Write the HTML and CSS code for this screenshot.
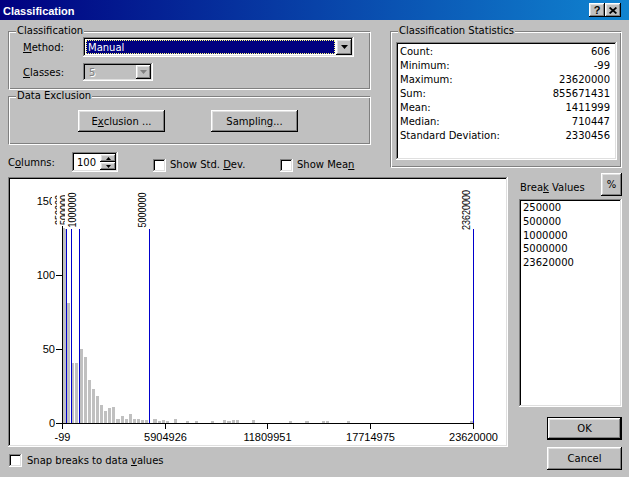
FILE: index.html
```html
<!DOCTYPE html>
<html lang="en">
<head>
<meta charset="utf-8">
<title>Classification</title>
<link rel="stylesheet" href="styles.css">
</head>
<body>
<div class="titlebar">
  <span class="title">Classification</span>
  <div class="tbtns">
    <span class="tbtn help">?</span>
    <span class="tbtn close"><svg width="8" height="7" viewBox="0 0 8 7"><path d="M0.6 0.5L7.4 6.5M7.4 0.5L0.6 6.5" stroke="#000" stroke-width="1.7" fill="none"/></svg></span>
  </div>
</div>

<div class="top">
  <div class="leftcol">
    <div class="group g-class">
      <span class="glabel">Classification</span>
      <div class="frow method">
        <span class="lbl"><u>M</u>ethod:</span>
        <div class="combo">
          <span class="sel">Manual</span>
          <span class="ddbtn"><svg width="7" height="4" viewBox="0 0 7 4"><polygon points="0,0 7,0 3.5,4" fill="#000"/></svg></span>
        </div>
      </div>
      <div class="frow classes">
        <span class="lbl"><u>C</u>lasses:</span>
        <div class="combo dis">
          <span class="disval">5</span>
          <span class="ddbtn small"><svg width="7" height="4" viewBox="0 0 7 4"><polygon points="0,0 7,0 3.5,4" fill="#808080"/></svg></span>
        </div>
      </div>
    </div>

    <div class="group g-excl">
      <span class="glabel">Data Exclusion</span>
      <span class="btn wide">E<u>x</u>clusion ...</span>
      <span class="btn wide">Samplin<u>g</u> ...</span>
    </div>

    <div class="colrow">
      <span class="lbl">C<u>o</u>lumns:</span>
      <div class="spin">
        <span class="val">100</span>
        <span class="arrows">
          <span class="sbtn"><svg width="5" height="3" viewBox="0 0 5 3"><polygon points="2.5,0 5,3 0,3" fill="#000"/></svg></span>
          <span class="sbtn"><svg width="5" height="3" viewBox="0 0 5 3"><polygon points="0,0 5,0 2.5,3" fill="#000"/></svg></span>
        </span>
      </div>
      <span class="chk chk1"><span class="box"></span><span>Show Std. <u>D</u>ev.</span></span>
      <span class="chk"><span class="box"></span><span>Show Mea<u>n</u></span></span>
    </div>
  </div>

  <div class="group g-stats">
    <span class="glabel">Classification Statistics</span>
    <div class="statlist">
      <div class="srow"><span>Count:</span><span>606</span></div>
      <div class="srow"><span>Minimum:</span><span>-99</span></div>
      <div class="srow"><span>Maximum:</span><span>23620000</span></div>
      <div class="srow"><span>Sum:</span><span>855671431</span></div>
      <div class="srow"><span>Mean:</span><span>1411999</span></div>
      <div class="srow"><span>Median:</span><span>710447</span></div>
      <div class="srow"><span>Standard Deviation:</span><span>2330456</span></div>
    </div>
  </div>
</div>

<div class="bottom">
  <div class="chartcol">
    <div class="chart">
      <svg class="plot" width="496" height="266" viewBox="0 0 496 266" shape-rendering="crispEdges">
        <g class="bars" fill="#c0c0c0">
          <rect x="53" y="49" width="3.1" height="195"/>
          <rect x="57.11" y="124" width="3.1" height="120"/>
          <rect x="61.22" y="184" width="3.1" height="60"/>
          <rect x="65.33" y="184" width="3.1" height="60"/>
          <rect x="69.44" y="170" width="3.1" height="74"/>
          <rect x="73.55" y="178" width="3.1" height="66"/>
          <rect x="77.66" y="201" width="3.1" height="43"/>
          <rect x="81.77" y="210" width="3.1" height="34"/>
          <rect x="85.88" y="217" width="3.1" height="27"/>
          <rect x="89.99" y="226" width="3.1" height="18"/>
          <rect x="94.1" y="232" width="3.1" height="12"/>
          <rect x="98.21" y="229" width="3.1" height="15"/>
          <rect x="102.32" y="228" width="3.1" height="16"/>
          <rect x="106.43" y="240" width="3.1" height="4"/>
          <rect x="110.54" y="237" width="3.1" height="7"/>
          <rect x="114.65" y="240" width="3.1" height="4"/>
          <rect x="118.76" y="235" width="3.1" height="9"/>
          <rect x="122.87" y="240" width="3.1" height="4"/>
          <rect x="126.98" y="240" width="3.1" height="4"/>
          <rect x="131.09" y="241" width="3.1" height="3"/>
          <rect x="135.2" y="241" width="3.1" height="3"/>
          <rect x="143.42" y="240" width="3.1" height="4"/>
          <rect x="147.53" y="242" width="3.1" height="2"/>
          <rect x="151.64" y="241" width="3.1" height="3"/>
          <rect x="155.75" y="242" width="3.1" height="2"/>
          <rect x="163.97" y="240" width="3.1" height="4"/>
          <rect x="176.3" y="242" width="3.1" height="2"/>
          <rect x="184.52" y="242" width="3.1" height="2"/>
          <rect x="200.96" y="242" width="3.1" height="2"/>
          <rect x="213.29" y="241" width="3.1" height="3"/>
          <rect x="217.4" y="242" width="3.1" height="2"/>
          <rect x="221.51" y="241" width="3.1" height="3"/>
          <rect x="225.62" y="241" width="3.1" height="3"/>
          <rect x="242.06" y="241" width="3.1" height="3"/>
          <rect x="279.05" y="242" width="3.1" height="2"/>
          <rect x="295.49" y="242" width="3.1" height="2"/>
          <rect x="311.93" y="242" width="3.1" height="2"/>
          <rect x="316.04" y="242" width="3.1" height="2"/>
          <rect x="336.59" y="242" width="3.1" height="2"/>
          <rect x="459.89" y="242" width="3.1" height="2"/>
        </g>
        <g class="breaks" stroke="#0000cc" stroke-width="1">
          <line x1="56.5" y1="50" x2="56.5" y2="244"/>
          <line x1="61.5" y1="50" x2="61.5" y2="244"/>
          <line x1="69.5" y1="50" x2="69.5" y2="244"/>
          <line x1="139.5" y1="50" x2="139.5" y2="244"/>
          <line x1="463.5" y1="50" x2="463.5" y2="244"/>
        </g>
        <g class="axes" stroke="#000" stroke-width="1">
          <line x1="52.5" y1="46" x2="52.5" y2="245"/>
          <line x1="52" y1="244.5" x2="464" y2="244.5"/>
          <line x1="46" y1="244.5" x2="52" y2="244.5"/>
          <line x1="46" y1="170.5" x2="52" y2="170.5"/>
          <line x1="46" y1="96.5" x2="52" y2="96.5"/>
          <line x1="46" y1="22.5" x2="52" y2="22.5"/>
          <line x1="52.5" y1="244" x2="52.5" y2="250"/>
          <line x1="155.5" y1="244" x2="155.5" y2="250"/>
          <line x1="257.5" y1="244" x2="257.5" y2="250"/>
          <line x1="360.5" y1="244" x2="360.5" y2="250"/>
          <line x1="463.5" y1="244" x2="463.5" y2="250"/>
        </g>
        <g class="ylab" text-anchor="end">
          <text x="45" y="248">0</text>
          <text x="45" y="174">50</text>
          <text x="45" y="100">100</text>
          <text x="45" y="26">150</text>
        </g>
        <g class="xlab" text-anchor="middle">
          <text x="52.5" y="262">-99</text>
          <text x="155.5" y="262">5904926</text>
          <text x="257.5" y="262">11809951</text>
          <text x="360.5" y="262">17714975</text>
          <text x="463.5" y="262">23620000</text>
        </g>
        <g class="blab">
          <rect x="42" y="15" width="13" height="32" fill="#fff"/>
          <text transform="translate(53 31) rotate(-90)" text-anchor="middle" textLength="30" lengthAdjust="spacingAndGlyphs">250000</text>
          <rect x="47" y="15" width="13" height="32" fill="#fff"/>
          <text transform="translate(58 31) rotate(-90)" text-anchor="middle" textLength="30" lengthAdjust="spacingAndGlyphs">500000</text>
          <rect x="55" y="13" width="13" height="37" fill="#fff"/>
          <text transform="translate(66 31) rotate(-90)" text-anchor="middle" textLength="35" lengthAdjust="spacingAndGlyphs">1000000</text>
          <rect x="125" y="13" width="13" height="37" fill="#fff"/>
          <text transform="translate(136 31) rotate(-90)" text-anchor="middle" textLength="35" lengthAdjust="spacingAndGlyphs">5000000</text>
          <rect x="449" y="10" width="13" height="42" fill="#fff"/>
          <text transform="translate(460 31) rotate(-90)" text-anchor="middle" textLength="40" lengthAdjust="spacingAndGlyphs">23620000</text>
        </g>
      </svg>
    </div>
    <div class="chk snap"><span class="box"></span><span>Snap breaks to data <u>v</u>alues</span></div>
  </div>

  <div class="sidecol">
    <div class="bvhead">
      <span class="bvlabel">Brea<u>k</u> Values</span>
      <span class="btn pct">%</span>
    </div>
    <div class="bvlist">
      <div>250000</div>
      <div>500000</div>
      <div>1000000</div>
      <div>5000000</div>
      <div>23620000</div>
    </div>
    <span class="btn ok">OK</span>
    <span class="btn cancel">Cancel</span>
  </div>
</div>
</body>
</html>
```

FILE: styles.css
```css
* { box-sizing: border-box; }
html, body { margin: 0; padding: 0; }
body {
  width: 629px;
  height: 477px;
  overflow: hidden;
  background: #c0c0c0;
  color: #000;
  font-family: "DejaVu Sans", sans-serif;
  font-size: 10px;
  line-height: 12px;
}
u { text-decoration: underline; text-underline-offset: 1px; }

/* shared 3D looks */
.btn, .tbtn, .ddbtn, .sbtn {
  background: #c0c0c0;
  box-shadow: inset -1px -1px #000, inset 1px 1px #fff, inset -2px -2px #808080, inset 2px 2px #dfdfdf;
}
.combo, .spin, .box, .statlist, .chart, .bvlist {
  box-shadow: inset -1px -1px #fff, inset 1px 1px #808080, inset -2px -2px #dfdfdf, inset 2px 2px #000;
}

/* title bar */
.titlebar {
  height: 20px;
  background: linear-gradient(to right, #000080, #1084d0);
  display: flex;
  align-items: center;
  justify-content: space-between;
  padding: 1px 8px 0 3px;
}
.title { color: #fff; font: bold 11px "Liberation Sans", sans-serif; }
.tbtns { display: flex; align-self: flex-start; margin-top: 2px; }
.tbtn {
  width: 16px;
  height: 14px;
  display: flex;
  align-items: center;
  justify-content: center;
  font: bold 11px "Liberation Sans", sans-serif;
}
.tbtn svg { display: block; }

/* group boxes */
.group {
  position: relative;
  border-style: solid;
  border-width: 1px;
  border-color: #808080 #fff #fff #808080;
  box-shadow: inset 1px 1px #fff, inset -1px -1px #808080;
}
.glabel {
  position: absolute;
  top: -7px;
  left: 7px;
  padding: 0 1px;
  background: #c0c0c0;
  line-height: 12px;
  white-space: nowrap;
}

/* top section */
.top { display: flex; padding: 11px 0 0 8px; }
.leftcol { width: 363px; display: flex; flex-direction: column; }
.g-class { height: 59px; padding: 5px 0 0 14px; }
.frow { display: flex; align-items: center; }
.frow .lbl { width: 60px; padding-top: 2px; }
.method { height: 20px; }
.classes { height: 18px; margin-top: 6px; }

.combo {
  width: 271px;
  height: 20px;
  padding: 2px;
  display: flex;
  background: #fff;
}
.sel {
  flex: 1;
  margin: 1px;
  padding: 1px 0 0 1px;
  background: #000080;
  color: #fff;
  border: 1px dotted #ffff7f;
  line-height: 11px;
}
.ddbtn {
  width: 16px;
  height: 16px;
  display: flex;
  align-items: center;
  justify-content: center;
}
.ddbtn svg { display: block; }
.combo.dis { width: 70px; height: 18px; background: #c0c0c0; }
.disval { flex: 1; padding: 1px 0 0 4px; color: #808080; line-height: 13px; text-shadow: 1px 1px #fff; }
.ddbtn.small { width: 15px; height: 14px; }

.g-excl {
  height: 49px;
  margin-top: 6px;
  padding: 13px 0 0 69px;
  display: flex;
  align-items: flex-start;
  gap: 46px;
}
.btn {
  display: flex;
  align-items: center;
  justify-content: center;
  white-space: nowrap;
  padding-top: 1px;
}
.btn.wide { width: 87px; height: 22px; }

.colrow { margin-top: 7px; height: 20px; display: flex; align-items: center; }
.colrow .lbl { width: 64px; padding-top: 2px; }
.spin {
  width: 46px;
  height: 20px;
  padding: 2px;
  display: flex;
  background: #fff;
}
.spin .val { flex: 1; padding: 1px 0 0 3px; line-height: 15px; }
.arrows { width: 16px; display: flex; flex-direction: column; }
.sbtn { height: 8px; display: flex; align-items: center; justify-content: center; padding-top: 0; }
.sbtn svg { display: block; }

.chk { display: flex; align-items: center; gap: 4px; margin-top: 6px; white-space: nowrap; }
.chk1 { margin-left: 35px; width: 127px; }
.box { width: 13px; height: 13px; background: #fff; flex: none; }

.g-stats { width: 232px; height: 137px; margin-left: 19px; padding: 10px 4px 0 5px; }
.statlist { height: 118px; background: #fff; padding: 3px 7px 0 4px; }
.srow { display: flex; justify-content: space-between; line-height: 14px; }

/* bottom section */
.bottom { display: flex; margin-top: 1px; padding-left: 8px; }
.chartcol { width: 500px; margin-top: 4px; }
.chart { width: 500px; height: 270px; padding: 2px; background: #fff; }
.plot { display: block; }
.plot text { font-family: "Liberation Sans", sans-serif; font-size: 11px; fill: #000; }
.chk.snap { margin-top: 7px; gap: 5px; padding-left: 1px; }

.sidecol { width: 103px; margin-left: 11px; display: flex; flex-direction: column; }
.bvhead { height: 23px; display: flex; justify-content: space-between; padding-left: 1px; }
.bvlabel { align-self: flex-end; margin-bottom: 2px; }
.btn.pct { width: 21px; height: 23px; }
.bvlist { margin-top: 3px; height: 208px; background: #fff; padding: 2px 0 0 4px; line-height: 13.75px; }
.btn.ok {
  margin: 10px 0 0 28px;
  width: 75px;
  height: 23px;
  border: 1px solid #000;
}
.btn.cancel { margin: 7px 0 0 28px; width: 75px; height: 23px; }
```
